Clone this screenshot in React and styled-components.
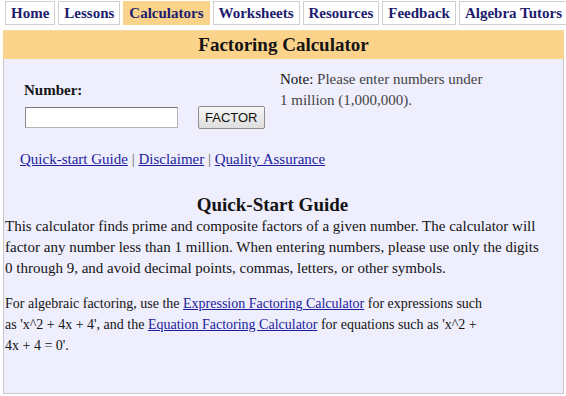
import React from 'react';
import styled, { createGlobalStyle } from 'styled-components';

const GlobalStyle = createGlobalStyle`
  body {
    margin: 0;
    background: #ffffff;
    font-family: "Liberation Serif", "Times New Roman", serif;
    color: #141414;
  }
`;

const Page = styled.div`
  width: 566px;
  height: 396px;
  overflow: hidden;
`;

const NavBar = styled.div`
  display: flex;
  gap: 3px;
  padding: 1px 0 0 5px;
`;

const Tab = styled.a`
  display: block;
  box-sizing: border-box;
  height: 24px;
  padding: 0 5px;
  border: 1px solid ${(p) => (p.active ? '#f9d38a' : '#cfcfcf')};
  background: ${(p) => (p.active ? '#f9d38a' : '#ffffff')};
  color: #1d1c6e;
  font-weight: bold;
  font-size: 15px;
  line-height: 22px;
  text-decoration: none;
  white-space: nowrap;
`;

const Panel = styled.div`
  margin: 5px 2px 0 3px;
  height: 364px;
  box-sizing: border-box;
  border: 1px solid #c6c6cc;
  border-top: none;
  background: #eeeefc;
`;

const Header = styled.div`
  height: 28px;
  margin: 0 -1px;
  background: #fbd38b;
  border-top: 1px solid #f3d9a8;
  text-align: center;
  font-weight: bold;
  font-size: 19px;
  line-height: 28px;
`;

const FormArea = styled.div`
  display: flex;
  padding: 10px 0 0 20px;
`;

const FormColumn = styled.div`
  width: 256px;
  padding-top: 13px;
`;

const Label = styled.div`
  font-weight: bold;
  font-size: 15px;
`;

const InputRow = styled.div`
  display: flex;
  align-items: center;
  gap: 20px;
  margin-top: 7px;
`;

const NumberInput = styled.input`
  box-sizing: border-box;
  width: 153px;
  height: 21px;
  margin: 0 0 0 1px;
  border: 1px solid #b4b4b4;
  border-top-color: #7a7a7a;
  border-left-color: #8a8a8a;
  background: #ffffff;
`;

const FactorButton = styled.button`
  box-sizing: border-box;
  height: 23px;
  padding: 0 6px;
  border: 1px solid #8e8e8e;
  border-radius: 2px;
  background: linear-gradient(#f6f6f6, #dedede);
  font-family: "Liberation Sans", Arial, sans-serif;
  font-size: 13px;
  color: #111111;
`;

const Note = styled.div`
  font-size: 15px;
  line-height: 21px;
  color: #444444;

  b {
    font-weight: normal;
    color: #111111;
  }
`;

const LinkRow = styled.div`
  padding: 22px 0 0 16px;
  font-size: 15px;
  color: #666666;
`;

const TextLink = styled.a`
  color: #1c1c9c;
  text-decoration: underline;
`;

const Guide = styled.div`
  width: 537px;
  padding-top: 26px;
`;

const GuideTitle = styled.h2`
  margin: 0;
  text-align: center;
  font-size: 19px;
  line-height: 22px;
`;

const Paragraph = styled.p`
  margin: 0 0 14px;
  padding-left: 1px;
  max-width: ${(p) => p.width}px;
  font-size: ${(p) => p.size}px;
  line-height: 21px;
`;

const tabs = ['Home', 'Lessons', 'Calculators', 'Worksheets', 'Resources', 'Feedback', 'Algebra Tutors'];

const App = () => {
  return (
    <Page>
      <GlobalStyle />
      <NavBar>
        {tabs.map((t) => (
          <Tab key={t} href='#' active={t === 'Calculators' ? 1 : 0}>
            {t}
          </Tab>
        ))}
      </NavBar>
      <Panel>
        <Header>Factoring Calculator</Header>
        <FormArea>
          <FormColumn>
            <Label>Number:</Label>
            <InputRow>
              <NumberInput type='text' />
              <FactorButton>FACTOR</FactorButton>
            </InputRow>
          </FormColumn>
          <Note>
            <b>Note:</b> Please enter numbers under
            <br />
            1 million (1,000,000).
          </Note>
        </FormArea>
        <LinkRow>
          <TextLink href='#'>Quick-start Guide</TextLink> | <TextLink href='#'>Disclaimer</TextLink> |{' '}
          <TextLink href='#'>Quality Assurance</TextLink>
        </LinkRow>
        <Guide>
          <GuideTitle>Quick-Start Guide</GuideTitle>
          <Paragraph width={537} size={15}>
            This calculator finds prime and composite factors of a given number. The calculator will factor
            any number less than 1 million. When entering numbers, please use only the digits 0 through 9,
            and avoid decimal points, commas, letters, or other symbols.
          </Paragraph>
          <Paragraph width={488} size={14}>
            For algebraic factoring, use the <TextLink href='#'>Expression Factoring Calculator</TextLink> for
            expressions such as 'x^2 + 4x + 4', and the{' '}
            <TextLink href='#'>Equation Factoring Calculator</TextLink> for equations such as 'x^2 + 4x + 4 =
            0'.
          </Paragraph>
        </Guide>
      </Panel>
    </Page>
  );
};

export default App;
